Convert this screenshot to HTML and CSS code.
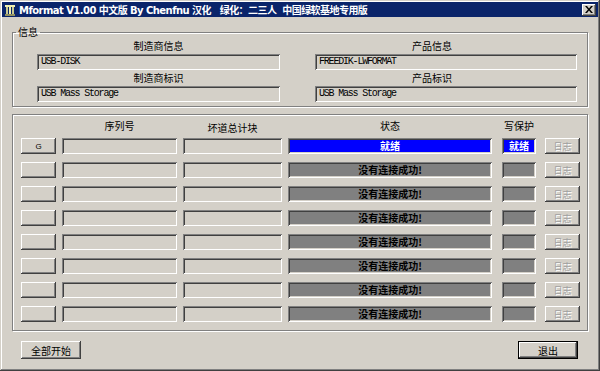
FILE: index.html
```html
<!DOCTYPE html>
<html lang="zh">
<head>
    <title>Mformat V1.00</title>
    <link rel="stylesheet" href="styles.css">
</head>
<body>
    <div class="window">
        <div class="titlebar">
            <svg class="app-icon" width="12" height="12" viewBox="0 0 12 12">
                <rect x="1" y="1" width="10" height="2" fill="#f0f0b0"/>
                <rect x="2" y="3" width="2" height="7" fill="#c8c890"/>
                <rect x="5" y="3" width="2" height="7" fill="#f0f0b0"/>
                <rect x="8" y="3" width="2" height="7" fill="#c8c890"/>
                <rect x="1" y="10" width="10" height="2" fill="#909060"/>
            </svg>
            <span class="title-text">Mformat V1.00 中文版 By Chenfnu 汉化   绿化：二三人  中国绿软基地专用版</span>
            <div class="close-btn">
                <svg width="8" height="7" viewBox="0 0 8 7">
                    <path d="M0 0h2l2 2.5L6 0h2L5 3.5 8 7H6L4 4.5 2 7H0l3-3.5z" fill="#000"/>
                </svg>
            </div>
        </div>

        <div class="client">
            <fieldset class="group info">
                <legend>信息</legend>
                <div class="info-grid">
                    <div class="field-label">制造商信息</div>
                    <div class="field-label right">产品信息</div>
                    <div class="textbox">USB-DISK</div>
                    <div class="textbox">FREEDIK-LWFORMAT</div>
                    <div class="field-label">制造商标识</div>
                    <div class="field-label right">产品标识</div>
                    <div class="textbox">USB Mass Storage</div>
                    <div class="textbox">USB Mass Storage</div>
                </div>
            </fieldset>

            <div class="group drives">
                <div class="drive-grid head">
                    <div></div>
                    <div class="col-title">序列号</div>
                    <div class="col-title low">坏道总计块</div>
                    <div class="col-title">状态</div>
                    <div class="col-title wide">写保护</div>
                    <div></div>
                </div>

                <div class="drive-grid">
                    <div class="btn small">G</div>
                    <div class="field"></div>
                    <div class="field"></div>
                    <div class="status ready">就绪</div>
                    <div class="wp ready">就绪</div>
                    <div class="btn log">日志</div>
                </div>
                <div class="drive-grid">
                    <div class="btn small"></div>
                    <div class="field"></div>
                    <div class="field"></div>
                    <div class="status">没有连接成功!</div>
                    <div class="wp"></div>
                    <div class="btn log">日志</div>
                </div>
                <div class="drive-grid">
                    <div class="btn small"></div>
                    <div class="field"></div>
                    <div class="field"></div>
                    <div class="status">没有连接成功!</div>
                    <div class="wp"></div>
                    <div class="btn log">日志</div>
                </div>
                <div class="drive-grid">
                    <div class="btn small"></div>
                    <div class="field"></div>
                    <div class="field"></div>
                    <div class="status">没有连接成功!</div>
                    <div class="wp"></div>
                    <div class="btn log">日志</div>
                </div>
                <div class="drive-grid">
                    <div class="btn small"></div>
                    <div class="field"></div>
                    <div class="field"></div>
                    <div class="status">没有连接成功!</div>
                    <div class="wp"></div>
                    <div class="btn log">日志</div>
                </div>
                <div class="drive-grid">
                    <div class="btn small"></div>
                    <div class="field"></div>
                    <div class="field"></div>
                    <div class="status">没有连接成功!</div>
                    <div class="wp"></div>
                    <div class="btn log">日志</div>
                </div>
                <div class="drive-grid">
                    <div class="btn small"></div>
                    <div class="field"></div>
                    <div class="field"></div>
                    <div class="status">没有连接成功!</div>
                    <div class="wp"></div>
                    <div class="btn log">日志</div>
                </div>
                <div class="drive-grid">
                    <div class="btn small"></div>
                    <div class="field"></div>
                    <div class="field"></div>
                    <div class="status">没有连接成功!</div>
                    <div class="wp"></div>
                    <div class="btn log">日志</div>
                </div>
            </div>

            <div class="footer">
                <div class="btn action">全部开始</div>
                <div class="btn action default">退出</div>
            </div>
        </div>
    </div>
</body>
</html>
```

FILE: styles.css
```css
* {
    margin: 0;
    padding: 0;
    box-sizing: border-box;
}
body {
    font-family: "Noto Sans CJK SC", "Liberation Sans", sans-serif;
    font-size: 10px;
    background: #d4d0c8;
}
.window {
    width: 600px;
    height: 371px;
    background: #d4d0c8;
    padding: 2px;
    box-shadow: inset -1px -1px #404040, inset 1px 1px #d4d0c8, inset -2px -2px #808080, inset 2px 2px #fff;
}
.titlebar {
    height: 15px;
    background: #0a246a;
    display: flex;
    align-items: center;
    padding: 0 2px 0 2px;
    color: white;
}
.app-icon {
    margin-right: 3px;
}
.title-text {
    font-family: "DejaVu Sans", "Noto Sans CJK SC", sans-serif;
    font-weight: bold;
    font-size: 10px;
    white-space: pre;
    flex: 1;
    letter-spacing: -0.55px;
}
.close-btn {
    width: 14px;
    height: 12px;
    background: #d4d0c8;
    display: flex;
    align-items: center;
    justify-content: center;
    box-shadow: inset -1px -1px #404040, inset 1px 1px #fff, inset -2px -2px #808080;
}
.client {
    padding: 0 10px;
}
.group {
    border: 1px solid #808080;
    box-shadow: inset 1px 1px #fff, 1px 1px #fff;
}
.info {
    margin-top: 9px;
    padding: 2px 0 4px 24px;
}
.info legend {
    margin-left: -21px;
    padding: 0 2px;
    line-height: 12px;
    font-size: 10px;
}
.info-grid {
    display: grid;
    grid-template-columns: 243px 262px;
    grid-template-rows: 12px 16px 12px 16px;
    column-gap: 35px;
    row-gap: 2px;
}
.field-label {
    text-align: center;
    line-height: 12px;
}
.field-label.right {
    padding-right: 28px;
}
.textbox {
    height: 16px;
    padding: 0 4px;
    font-family: "Liberation Mono", monospace;
    font-size: 10px;
    letter-spacing: -1.2px;
    line-height: 16px;
    box-shadow: inset 1px 1px #808080, inset -1px -1px #fff, inset 2px 2px #404040, inset -2px -2px #d4d0c8;
}
.drives {
    margin-top: 7px;
    padding: 3px 0 8px 8px;
}
.drive-grid {
    display: grid;
    grid-template-columns: 35px 115px 99px 204px 38px 38px;
    column-gap: 6px;
    height: 16px;
    margin-bottom: 8px;
}
.drive-grid:last-child {
    margin-bottom: 0;
}
.drive-grid.head {
    margin-bottom: 4px;
}
.col-title {
    text-align: center;
    line-height: 16px;
}
.col-title.low {
    padding-top: 2px;
}
.col-title.wide {
    grid-column: 5 / 6;
    padding-left: 4px;
}
.btn {
    background: #d4d0c8;
    display: flex;
    align-items: center;
    justify-content: center;
    box-shadow: inset -1px -1px #404040, inset 1px 1px #fff, inset -2px -2px #808080;
}
.btn.small {
    font-family: "Liberation Sans", sans-serif;
    font-size: 8px;
}
.btn.log {
    width: 35px;
    justify-self: end;
    color: #a0a0a0;
    text-shadow: 1px 1px #fff;
    font-size: 9px;
}
.field {
    box-shadow: inset 1px 1px #808080, inset -1px -1px #fff, inset 2px 2px #404040, inset -2px -2px #d4d0c8;
}
.status, .wp {
    background: #808080;
    color: #000;
    font-weight: bold;
    font-size: 10px;
    line-height: 16px;
    text-align: center;
    box-shadow: inset 1px 1px #808080, inset -1px -1px #fff, inset 2px 2px #404040, inset -2px -2px #d4d0c8;
}
.wp {
    width: 34px;
    justify-self: end;
}
.ready {
    background: #0000ff;
    color: #fff;
}
.footer {
    display: flex;
    justify-content: space-between;
    padding: 10px 10px 0 9px;
}
.btn.action {
    width: 60px;
    height: 18px;
    font-size: 10px;
}
.btn.default {
    box-shadow: inset 0 0 0 1px #000, inset -2px -2px #404040, inset 2px 2px #fff, inset -3px -3px #808080;
}
```
